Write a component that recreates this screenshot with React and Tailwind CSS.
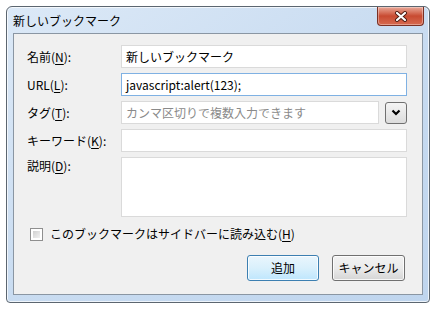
import React from 'react';

// ダイアログのラベル（ニーモニック付き）
function Label({ text, mnemonic, className = '' }) {
  return (
    <span className={`w-[94px] shrink-0 text-black ${className}`}>
      {text}(<span className="underline underline-offset-2">{mnemonic}</span>):
    </span>
  );
}

function CloseGlyph() {
  return (
    <svg width="14" height="11" viewBox="0 0 14 11">
      <path d="M3 2 L11 9 M11 2 L3 9" stroke="#4a1a12" strokeWidth="4" strokeLinecap="round" />
      <path d="M3 2 L11 9 M11 2 L3 9" stroke="#ffffff" strokeWidth="2.2" strokeLinecap="round" />
    </svg>
  );
}

export default function App() {
  return (
    <div className="w-[437px] h-[309px] bg-white pl-[6px] pt-[6px] font-['Noto_Sans_CJK_JP',sans-serif] text-[12px] leading-[14px]">
      {/* ウィンドウ枠 */}
      <div className="w-[424px] h-[297px] flex flex-col border border-[#5c6670] rounded-t-[6px] rounded-b-[4px] bg-gradient-to-br from-[#dce9f7] via-[#c9dcf1] to-[#bfd5ee] px-[6px] pb-[7px] shadow-[inset_0_0_0_1px_rgba(255,255,255,0.7)]">
        {/* タイトルバー */}
        <div className="h-[26px] flex items-start justify-between">
          <span className="pt-[7px] text-black">新しいブックマーク</span>
          <div className="w-[47px] h-[19px] mr-[-1px] flex items-center justify-center rounded-b-[4px] border border-t-0 border-[#7a3024] bg-gradient-to-b from-[#e9a999] via-[#c84a31] to-[#d66a50] shadow-[inset_0_0_0_1px_rgba(255,255,255,0.35)]">
            <CloseGlyph />
          </div>
        </div>

        {/* クライアント領域 */}
        <div className="flex-1 flex flex-col border border-[#8a96a3] bg-[#f0f0f0] pt-[11px] pl-[13px] pr-[15px]">
          <div className="flex flex-col gap-[5px]">
            <div className="flex items-center h-[23px]">
              <Label text="名前" mnemonic="N" />
              <div className="flex-1 h-[23px] flex items-center bg-white border border-[#dadada] px-[4px] text-black">新しいブックマーク</div>
            </div>
            <div className="flex items-center h-[23px]">
              <Label text="URL" mnemonic="L" />
              <div className="flex-1 h-[23px] flex items-center bg-white border border-[#7fb1e3] px-[4px] text-black">javascript:alert(123);</div>
            </div>
            <div className="flex items-center h-[23px]">
              <Label text="タグ" mnemonic="T" />
              <div className="w-[259px] h-[23px] flex items-center bg-white border border-[#dadada] px-[4px] text-[#8a8a8a]">カンマ区切りで複数入力できます</div>
              <div className="ml-[6px] w-[22px] h-[22px] flex items-center justify-center rounded-[3px] border border-[#707070] bg-gradient-to-b from-[#f4f4f4] to-[#dcdcdc]">
                <svg width="10" height="7" viewBox="0 0 10 7">
                  <path d="M1.5 1.5 L5 5 L8.5 1.5" stroke="#000" strokeWidth="2.2" fill="none" />
                </svg>
              </div>
            </div>
            <div className="flex items-center h-[23px]">
              <Label text="キーワード" mnemonic="K" />
              <div className="flex-1 h-[23px] bg-white border border-[#dadada]" />
            </div>
            <div className="flex items-start">
              <Label text="説明" mnemonic="D" className="pt-[2px]" />
              <div className="flex-1 h-[60px] bg-white border border-[#dadada]" />
            </div>
          </div>

          {/* チェックボックス */}
          <div className="mt-[10px] ml-[3px] flex items-center gap-[7px]">
            <div className="w-[13px] h-[13px] border border-[#8f8f8f] bg-white p-[2px]">
              <div className="w-full h-full bg-gradient-to-br from-[#d0d0d0] to-[#f2f2f2]" />
            </div>
            <span className="text-black">
              このブックマークはサイドバーに読み込む(<span className="underline underline-offset-2">H</span>)
            </span>
          </div>

          {/* ボタン */}
          <div className="mt-[14px] flex justify-end gap-[13px] pr-[2px]">
            <button className="w-[72px] h-[26px] rounded-[3px] border border-[#3c7fb1] bg-gradient-to-b from-[#eaf6fd] via-[#d9f0fc] to-[#bee6fd] shadow-[inset_0_0_0_1px_rgba(255,255,255,0.8)] text-black">追加</button>
            <button className="w-[73px] h-[26px] rounded-[3px] border border-[#707070] bg-gradient-to-b from-[#f2f2f2] via-[#ebebeb] to-[#d5d5d5] shadow-[inset_0_0_0_1px_rgba(255,255,255,0.8)] text-black">キャンセル</button>
          </div>
        </div>
      </div>
    </div>
  );
}
